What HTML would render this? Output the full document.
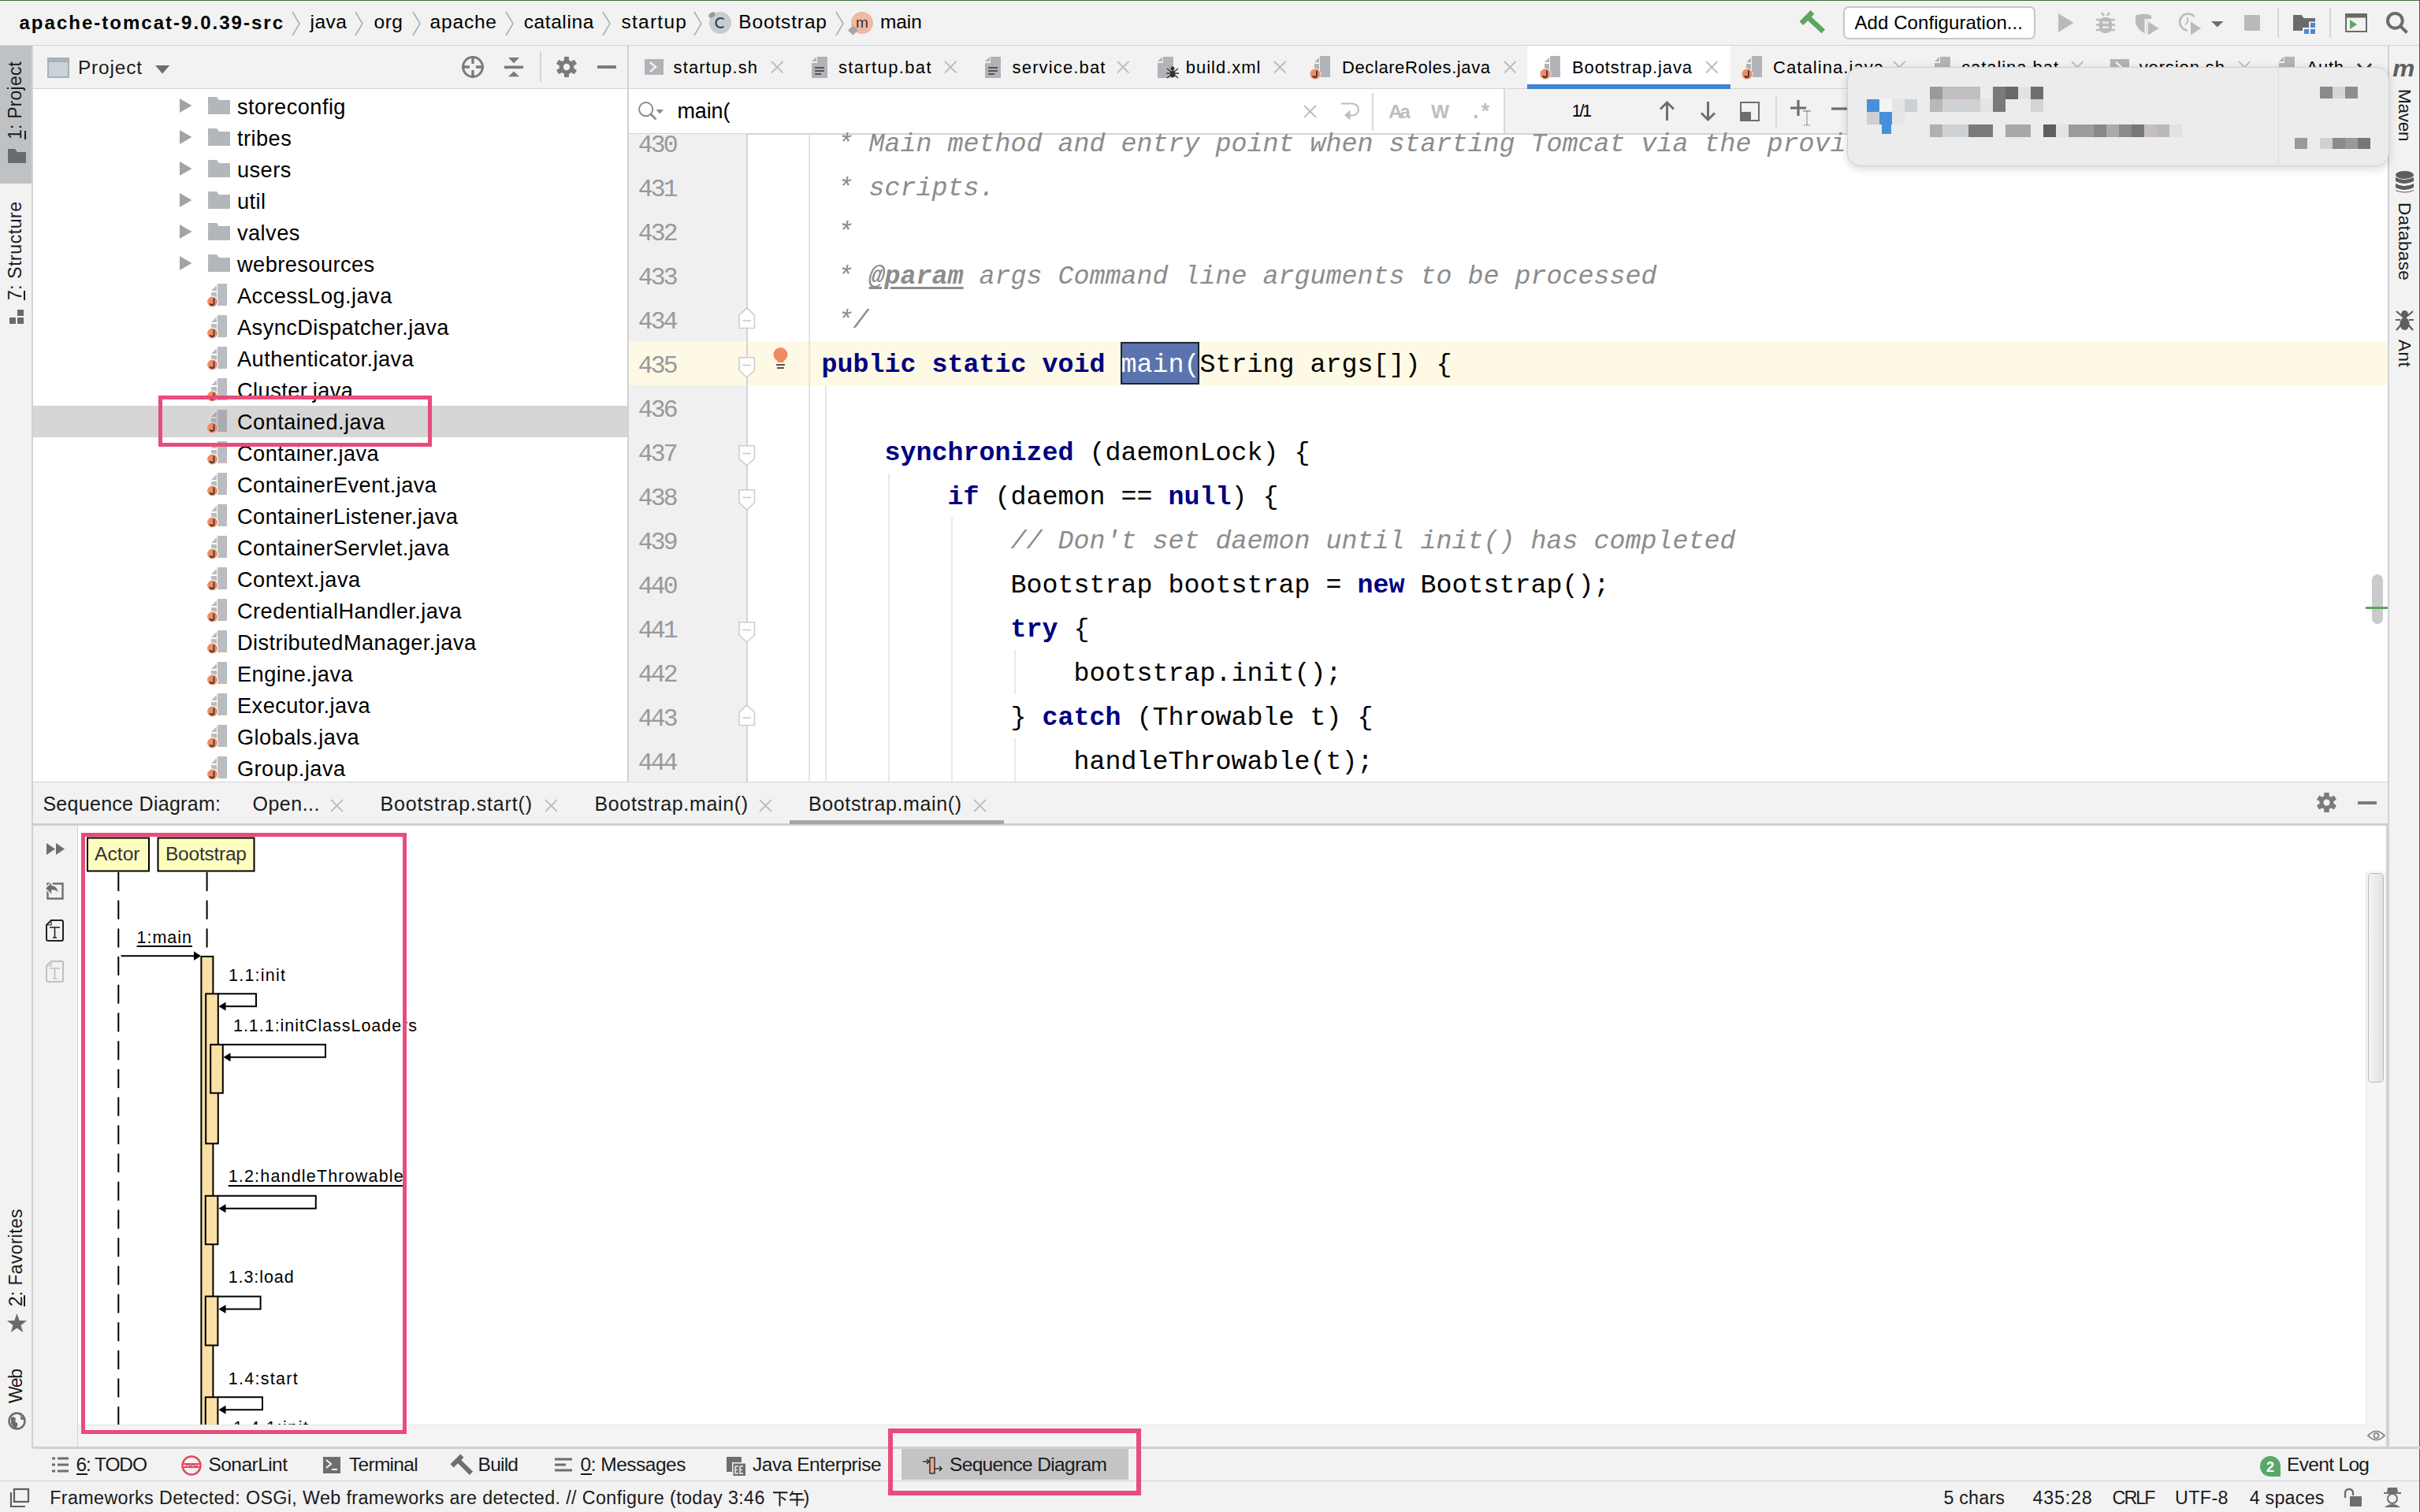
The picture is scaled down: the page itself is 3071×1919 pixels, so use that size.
<!DOCTYPE html>
<html><head><meta charset="utf-8">
<style>
*{margin:0;padding:0;box-sizing:border-box}
html,body{width:3071px;height:1919px;overflow:hidden;background:#f2f2f2;font-family:"Liberation Sans",sans-serif;color:#000;position:relative}
.a{position:absolute}
.t{position:absolute;white-space:pre;line-height:1}
svg{position:absolute;overflow:visible}
</style></head><body>
<div class="a" style="left:0px;top:0px;width:3071px;height:1px;background:#356b3c;"></div>
<div class="a" style="left:3070px;top:0px;width:1px;height:1919px;background:#356b3c;"></div>
<div class="a" style="left:0px;top:1px;width:3070px;height:1px;background:#fbfbfb;"></div>
<div class="a" style="left:0px;top:57px;width:3070px;height:1px;background:#d4d4d4;"></div>
<div class="a" style="left:0px;top:58px;width:40px;height:175px;background:#bfc2c5;"></div>
<div class="a" style="left:40px;top:58px;width:2px;height:1780px;background:#d2d2d2;"></div>
<div class="a" style="left:42px;top:113px;width:754px;height:879px;background:#fff;"></div>
<div class="a" style="left:42px;top:112px;width:754px;height:1px;background:#d4d4d4;"></div>
<div class="a" style="left:796px;top:58px;width:2px;height:934px;background:#d2d2d2;"></div>
<div class="a" style="left:798px;top:112px;width:2232px;height:1px;background:#d4d4d4;"></div>
<div class="a" style="left:798px;top:113px;width:1110px;height:56px;background:#fff;"></div>
<div class="a" style="left:1908px;top:113px;width:2px;height:56px;background:#d8d8d8;"></div>
<div class="a" style="left:798px;top:169px;width:2232px;height:2px;background:#d4d4d4;"></div>
<div class="a" style="left:798px;top:171px;width:2232px;height:821px;background:#fff;"></div>
<div class="a" style="left:798px;top:170px;width:150px;height:822px;background:#f0f0f0;"></div>
<div class="a" style="left:3030px;top:58px;width:2px;height:1780px;background:#d2d2d2;"></div>
<div class="a" style="left:42px;top:992px;width:2988px;height:1px;background:#d4d4d4;"></div>
<div class="a" style="left:42px;top:1045px;width:2988px;height:3px;background:#d0d0d0;"></div>
<div class="a" style="left:99px;top:1048px;width:2929px;height:761px;background:#fff;"></div>
<div class="a" style="left:98px;top:1048px;width:1px;height:788px;background:#d4d4d4;"></div>
<div class="a" style="left:3028px;top:1048px;width:2px;height:788px;background:#d2d2d2;"></div>
<div class="a" style="left:42px;top:1836px;width:3029px;height:3px;background:#d0d0d0;"></div>
<div class="a" style="left:0px;top:1879px;width:3070px;height:1px;background:#d4d4d4;"></div>
<div class="t" style="left:24.5px;top:16.60px;font-size:24px;color:#000;font-weight:700;letter-spacing:2.016px;">apache-tomcat-9.0.39-src</div>
<svg style="left:370px;top:15px;" width="11" height="30" viewBox="0 0 11 30"><path d="M1 0 L10 15 L1 30" fill="none" stroke="#a9afb4" stroke-width="1.6"/></svg>
<svg style="left:450px;top:15px;" width="11" height="30" viewBox="0 0 11 30"><path d="M1 0 L10 15 L1 30" fill="none" stroke="#a9afb4" stroke-width="1.6"/></svg>
<svg style="left:522.5px;top:15px;" width="11" height="30" viewBox="0 0 11 30"><path d="M1 0 L10 15 L1 30" fill="none" stroke="#a9afb4" stroke-width="1.6"/></svg>
<svg style="left:640.5px;top:15px;" width="11" height="30" viewBox="0 0 11 30"><path d="M1 0 L10 15 L1 30" fill="none" stroke="#a9afb4" stroke-width="1.6"/></svg>
<svg style="left:764px;top:15px;" width="11" height="30" viewBox="0 0 11 30"><path d="M1 0 L10 15 L1 30" fill="none" stroke="#a9afb4" stroke-width="1.6"/></svg>
<svg style="left:880px;top:15px;" width="11" height="30" viewBox="0 0 11 30"><path d="M1 0 L10 15 L1 30" fill="none" stroke="#a9afb4" stroke-width="1.6"/></svg>
<svg style="left:1060px;top:15px;" width="11" height="30" viewBox="0 0 11 30"><path d="M1 0 L10 15 L1 30" fill="none" stroke="#a9afb4" stroke-width="1.6"/></svg>
<div class="t" style="left:393.5px;top:16.18px;font-size:24.5px;color:#000;letter-spacing:0.516px;">java</div>
<div class="t" style="left:474.5px;top:16.18px;font-size:24.5px;color:#000;letter-spacing:0.539px;">org</div>
<div class="t" style="left:545.6px;top:16.18px;font-size:24.5px;color:#000;letter-spacing:0.802px;">apache</div>
<div class="t" style="left:664.7px;top:16.18px;font-size:24.5px;color:#000;letter-spacing:0.592px;">catalina</div>
<div class="t" style="left:788.4px;top:16.18px;font-size:24.5px;color:#000;letter-spacing:1.282px;">startup</div>
<div class="t" style="left:937.3px;top:16.18px;font-size:24.5px;color:#000;letter-spacing:0.853px;">Bootstrap</div>
<div class="t" style="left:1117px;top:16.18px;font-size:24.5px;color:#000;letter-spacing:-0.103px;">main</div>
<svg style="left:900px;top:14.8px;" width="28" height="28" viewBox="0 0 28 28"><circle cx="14" cy="14" r="14" fill="#c6cdd2"/><path d="M18.5 9.5 A6 6 0 1 0 18.5 18.5" fill="none" stroke="#3a3f45" stroke-width="2.2"/><ellipse cx="3.5" cy="4" rx="4.5" ry="3" fill="#9a9a9a" transform="rotate(-35 3.5 4)"/></svg>
<svg style="left:1080px;top:14.8px;" width="28" height="28" viewBox="0 0 28 28"><circle cx="14" cy="14" r="14" fill="#efb9a3"/><text x="14" y="20" text-anchor="middle" font-family="Liberation Sans" font-size="19" fill="#333">m</text><rect x="-2" y="19" width="9" height="9" fill="#a6a6a6" transform="rotate(45 2.5 23.5)"/></svg>
<svg style="left:2284px;top:15px;" width="31" height="28" viewBox="0 0 31 28"><rect x="-10" y="-3.3" width="20" height="6.6" fill="#5aa65e" transform="translate(9 7.5) rotate(-45)"/><rect x="0" y="-3.3" width="27" height="6.6" fill="#5aa65e" transform="translate(10 6.5) rotate(43)"/></svg>
<div class="a" style="left:2339px;top:7.5px;width:244px;height:42.5px;background:#fff;border:2px solid #c9c6c6;border-radius:7px"></div>
<div class="t" style="left:2353.5px;top:16.60px;font-size:24px;color:#000;letter-spacing:0.072px;">Add Configuration...</div>
<svg style="left:2612px;top:17px;" width="20" height="24" viewBox="0 0 20 24"><path d="M0 0 L19.5 12 L0 24 Z" fill="#bababa"/></svg>
<svg style="left:2660px;top:15.4px;" width="24" height="28" viewBox="0 0 24 28"><rect x="4" y="7" width="16" height="20" rx="7" fill="#bababa"/><path d="M7 1 L10 5 M17 1 L14 5 M0 10 H24 M0 16.5 H24 M0 23 H24" stroke="#bababa" stroke-width="2.4"/><rect x="8" y="12.5" width="8" height="2.2" fill="#f2f2f2"/><rect x="8" y="18.5" width="8" height="2.2" fill="#f2f2f2"/></svg>
<svg style="left:2710px;top:17px;" width="30" height="28" viewBox="0 0 30 28"><path d="M0 2.5 Q10 -1 20 2.5 V7 H14.5 V25 Q12 26.5 10.5 24.5 Q1.5 20 0 11 Z" fill="#bababa"/><rect x="11.5" y="7" width="2.4" height="18" fill="#f2f2f2"/><path d="M16 10.6 L29.5 19 L16 27.4 Z" fill="#bababa"/></svg>
<svg style="left:2764px;top:16px;" width="30" height="29" viewBox="0 0 30 29"><path d="M20.5 5 A10.5 10.5 0 1 0 11.8 22.5" fill="none" stroke="#bababa" stroke-width="2.6"/><path d="M12 6 V12 L9 15.5" fill="none" stroke="#bababa" stroke-width="1.8"/><path d="M16 11.5 L29 20 L16 28.5 Z" fill="#bababa"/></svg>
<svg style="left:2806px;top:27px;" width="16" height="8" viewBox="0 0 16 8"><path d="M0 0 H15.6 L7.8 7.5 Z" fill="#6e6e6e"/></svg>
<div class="a" style="left:2848px;top:19px;width:20px;height:20px;background:#bababa;"></div>
<div class="a" style="left:2890px;top:10px;width:2px;height:38px;background:#d4d4d4;"></div>
<svg style="left:2910px;top:19px;" width="29" height="25" viewBox="0 0 29 25"><path d="M0 0 H10.6 L13.5 4 H28 V8.5 H20 V16 H12 V20 H0 Z" fill="#6b6b6b"/><rect x="22" y="10" width="6" height="6" fill="#4a8ad4"/><rect x="14" y="18" width="6" height="6" fill="#4a8ad4"/><rect x="22" y="18" width="6" height="6" fill="#4a8ad4"/></svg>
<div class="a" style="left:2956px;top:10px;width:2px;height:38px;background:#d4d4d4;"></div>
<svg style="left:2976px;top:17px;" width="28" height="24" viewBox="0 0 28 24"><rect x="1" y="1" width="26" height="22" fill="none" stroke="#6b6b6b" stroke-width="2"/><rect x="0" y="0" width="28" height="5.5" fill="#6b6b6b"/><path d="M6 8 L15 14 L6 20 Z" fill="#5aa86a"/></svg>
<svg style="left:3026px;top:13px;" width="32" height="32" viewBox="0 0 32 32"><circle cx="13.4" cy="13.3" r="9.4" fill="none" stroke="#6b6b6b" stroke-width="4"/><path d="M20 20 L28.5 28.5" stroke="#6b6b6b" stroke-width="4"/></svg>
<div class="t" style="left:7.72px;top:177.00px;font-size:23px;color:#1a1a1a;letter-spacing:0.205px;transform-origin:0 0;transform:rotate(-90deg);">1: Project</div>
<div class="a" style="left:30.5px;top:166px;width:2px;height:11px;background:#1a1a1a;"></div>
<div class="a" style="left:29.5px;top:368.5px;width:2px;height:12px;background:#1a1a1a;"></div>
<div class="a" style="left:29.5px;top:1644px;width:2px;height:14px;background:#1a1a1a;"></div>
<svg style="left:10px;top:189px;" width="23" height="18" viewBox="0 0 23 18"><path d="M0 0 H9 L12 4 H23 V18 H0 Z" fill="#6b6b6b"/></svg>
<div class="t" style="left:8.32px;top:381.00px;font-size:23px;color:#1a1a1a;letter-spacing:0.555px;transform-origin:0 0;transform:rotate(-90deg);">7: Structure</div>
<svg style="left:12px;top:393px;" width="18" height="18" viewBox="0 0 18 18"><rect x="10" y="0" width="8" height="8" fill="#6a6a6a"/><rect x="0" y="10" width="8" height="8" fill="#6a6a6a"/><rect x="10" y="10" width="8" height="8" fill="#6a6a6a"/></svg>
<div class="t" style="left:8.72px;top:1658.40px;font-size:23px;color:#1a1a1a;letter-spacing:0.313px;transform-origin:0 0;transform:rotate(-90deg);">2: Favorites</div>
<svg style="left:8.5px;top:1667px;" width="25" height="25" viewBox="0 0 25 25"><path d="M12.5 0 L15.6 8.9 L25 9.2 L17.5 15 L20.2 24 L12.5 18.6 L4.8 24 L7.5 15 L0 9.2 L9.4 8.9 Z" fill="#6a6a6a"/></svg>
<div class="t" style="left:8.72px;top:1781.00px;font-size:23px;color:#1a1a1a;letter-spacing:-1.445px;transform-origin:0 0;transform:rotate(-90deg);">Web</div>
<svg style="left:10px;top:1792px;" width="23" height="23" viewBox="0 0 23 23"><circle cx="11.5" cy="11.5" r="10" fill="none" stroke="#6a6a6a" stroke-width="2.5"/><path d="M4 7 Q9 5 10 9 Q8 13 12 14 Q13 18 10 21 Q5 18 4 14 Z M14 3 Q17 6 16 9 Q19 11 21 9" fill="#6a6a6a"/></svg>
<div class="t" style="left:3061.6px;top:112.80px;font-size:22.5px;color:#1a1a1a;letter-spacing:-0.237px;transform-origin:0 0;transform:rotate(90deg);">Maven</div>
<div class="t" style="left:3037px;top:72.00px;font-size:30px;color:#5e5e5e;font-weight:700;font-style:italic;transform:scaleX(1.05)">m</div>
<svg style="left:3039.5px;top:217px;" width="23" height="29" viewBox="0 0 23 29"><ellipse cx="11.5" cy="5" rx="11.5" ry="5" fill="#5e5e5e"/><path d="M0 8 Q11.5 14 23 8 V13 Q11.5 19 0 13 Z M0 16 Q11.5 22 23 16 V21 Q11.5 27 0 21 Z M0 24 Q11.5 29 23 24 V25 Q11.5 30 0 25 Z" fill="#5e5e5e"/></svg>
<div class="t" style="left:3061.6px;top:257.00px;font-size:22.5px;color:#1a1a1a;letter-spacing:0.353px;transform-origin:0 0;transform:rotate(90deg);">Database</div>
<svg style="left:3039.5px;top:392px;" width="23" height="28" viewBox="0 0 23 28"><ellipse cx="11.5" cy="7" rx="4.5" ry="5" fill="#5e5e5e"/><ellipse cx="11.5" cy="19" rx="6" ry="8" fill="#5e5e5e"/><path d="M1 3 L8 9 M22 3 L15 9 M0 14 H6 M23 14 H17 M1 27 L7 20 M22 27 L16 20" stroke="#5e5e5e" stroke-width="2.2"/></svg>
<div class="t" style="left:3061.6px;top:430.80px;font-size:22.5px;color:#1a1a1a;letter-spacing:0.459px;transform-origin:0 0;transform:rotate(90deg);">Ant</div>
<svg style="left:60px;top:73px;" width="28" height="26" viewBox="0 0 28 26"><rect x="1" y="1" width="26" height="24" fill="#c9d2d8" stroke="#a9b1b7" stroke-width="2"/><rect x="1" y="1" width="26" height="5" fill="#a9b1b7"/></svg>
<div class="t" style="left:99px;top:74.26px;font-size:24.4px;color:#1a1a1a;letter-spacing:0.846px;">Project</div>
<svg style="left:196.7px;top:82.6px;" width="18.3" height="10.4" viewBox="0 0 18.3 10.4"><path d="M0 0 H18.3 L9.15 10.4 Z" fill="#6e6e6e"/></svg>
<svg style="left:586px;top:71px;" width="28" height="28" viewBox="0 0 28 28"><circle cx="14" cy="14" r="12.4" fill="none" stroke="#7b7b7b" stroke-width="3"/><path d="M14 0 V10 M14 18 V28 M0 14 H10 M18 14 H28" stroke="#7b7b7b" stroke-width="3.3"/></svg>
<svg style="left:640px;top:72.8px;" width="24" height="25" viewBox="0 0 24 25"><path d="M5 0 H19 L12 7.2 Z M5 24.3 H19 L12 17.4 Z" fill="#7b7b7b"/><rect x="0" y="10.5" width="24" height="3.6" fill="#7b7b7b"/></svg>
<div class="a" style="left:684.5px;top:65px;width:2px;height:39px;background:#d4d4d4;"></div>
<svg style="left:705.5px;top:72px;" width="26" height="26" viewBox="0 0 26 26"><rect x="10.0" y="0" width="6" height="26" fill="#7b7b7b" transform="rotate(0 13.0 13.0)"/><rect x="10.0" y="0" width="6" height="26" fill="#7b7b7b" transform="rotate(60 13.0 13.0)"/><rect x="10.0" y="0" width="6" height="26" fill="#7b7b7b" transform="rotate(120 13.0 13.0)"/><rect x="10.0" y="0" width="6" height="26" fill="#7b7b7b" transform="rotate(180 13.0 13.0)"/><rect x="10.0" y="0" width="6" height="26" fill="#7b7b7b" transform="rotate(240 13.0 13.0)"/><rect x="10.0" y="0" width="6" height="26" fill="#7b7b7b" transform="rotate(300 13.0 13.0)"/><circle cx="13.0" cy="13.0" r="9.36" fill="#7b7b7b"/><circle cx="13.0" cy="13.0" r="4.16" fill="#f2f2f2"/></svg>
<div class="a" style="left:758px;top:82.8px;width:24px;height:4px;background:#7b7b7b;"></div>
<div class="a" style="left:42px;top:515px;width:754px;height:40px;background:#d6d6d6;"></div>
<svg style="left:228px;top:125px;" width="16" height="18" viewBox="0 0 16 18"><path d="M0 0 L15.5 9 L0 18 Z" fill="#a0a4a8"/></svg>
<svg style="left:264px;top:123px;" width="28" height="22" viewBox="0 0 28 22"><path d="M0 0 H11 L14 4 H28 V22 H0 Z" fill="#b3b7bb"/></svg>
<div class="t" style="left:301px;top:121.88px;font-size:27.2px;color:#000;letter-spacing:0.45px;">storeconfig</div>
<svg style="left:228px;top:165px;" width="16" height="18" viewBox="0 0 16 18"><path d="M0 0 L15.5 9 L0 18 Z" fill="#a0a4a8"/></svg>
<svg style="left:264px;top:163px;" width="28" height="22" viewBox="0 0 28 22"><path d="M0 0 H11 L14 4 H28 V22 H0 Z" fill="#b3b7bb"/></svg>
<div class="t" style="left:301px;top:161.88px;font-size:27.2px;color:#000;letter-spacing:0.45px;">tribes</div>
<svg style="left:228px;top:205px;" width="16" height="18" viewBox="0 0 16 18"><path d="M0 0 L15.5 9 L0 18 Z" fill="#a0a4a8"/></svg>
<svg style="left:264px;top:203px;" width="28" height="22" viewBox="0 0 28 22"><path d="M0 0 H11 L14 4 H28 V22 H0 Z" fill="#b3b7bb"/></svg>
<div class="t" style="left:301px;top:201.88px;font-size:27.2px;color:#000;letter-spacing:0.45px;">users</div>
<svg style="left:228px;top:245px;" width="16" height="18" viewBox="0 0 16 18"><path d="M0 0 L15.5 9 L0 18 Z" fill="#a0a4a8"/></svg>
<svg style="left:264px;top:243px;" width="28" height="22" viewBox="0 0 28 22"><path d="M0 0 H11 L14 4 H28 V22 H0 Z" fill="#b3b7bb"/></svg>
<div class="t" style="left:301px;top:241.88px;font-size:27.2px;color:#000;letter-spacing:0.45px;">util</div>
<svg style="left:228px;top:285px;" width="16" height="18" viewBox="0 0 16 18"><path d="M0 0 L15.5 9 L0 18 Z" fill="#a0a4a8"/></svg>
<svg style="left:264px;top:283px;" width="28" height="22" viewBox="0 0 28 22"><path d="M0 0 H11 L14 4 H28 V22 H0 Z" fill="#b3b7bb"/></svg>
<div class="t" style="left:301px;top:281.88px;font-size:27.2px;color:#000;letter-spacing:0.45px;">valves</div>
<svg style="left:228px;top:325px;" width="16" height="18" viewBox="0 0 16 18"><path d="M0 0 L15.5 9 L0 18 Z" fill="#a0a4a8"/></svg>
<svg style="left:264px;top:323px;" width="28" height="22" viewBox="0 0 28 22"><path d="M0 0 H11 L14 4 H28 V22 H0 Z" fill="#b3b7bb"/></svg>
<div class="t" style="left:301px;top:321.88px;font-size:27.2px;color:#000;letter-spacing:0.45px;">webresources</div>
<svg style="left:261.5px;top:360px;" width="27" height="31" viewBox="0 0 27 31"><path d="M14 0 H26 V28 H14 Z" fill="#b9bdc1"/><path d="M6 9 L13 2 V9 Z" fill="#b9bdc1"/><path d="M6 11 H13 V28 H6 Z" fill="#b9bdc1"/><circle cx="7.5" cy="23" r="7" fill="#ee8c63" stroke="#fff" stroke-width="1.2"/><path d="M9.5 18.5 V24.5 Q9.5 27 7 27 Q5 27 4.6 25" fill="none" stroke="#3a3a3a" stroke-width="1.8"/></svg>
<div class="t" style="left:301px;top:361.88px;font-size:27.2px;color:#000;letter-spacing:0.45px;">AccessLog.java</div>
<svg style="left:261.5px;top:400px;" width="27" height="31" viewBox="0 0 27 31"><path d="M14 0 H26 V28 H14 Z" fill="#b9bdc1"/><path d="M6 9 L13 2 V9 Z" fill="#b9bdc1"/><path d="M6 11 H13 V28 H6 Z" fill="#b9bdc1"/><circle cx="7.5" cy="23" r="7" fill="#ee8c63" stroke="#fff" stroke-width="1.2"/><path d="M9.5 18.5 V24.5 Q9.5 27 7 27 Q5 27 4.6 25" fill="none" stroke="#3a3a3a" stroke-width="1.8"/></svg>
<div class="t" style="left:301px;top:401.88px;font-size:27.2px;color:#000;letter-spacing:0.45px;">AsyncDispatcher.java</div>
<svg style="left:261.5px;top:440px;" width="27" height="31" viewBox="0 0 27 31"><path d="M14 0 H26 V28 H14 Z" fill="#b9bdc1"/><path d="M6 9 L13 2 V9 Z" fill="#b9bdc1"/><path d="M6 11 H13 V28 H6 Z" fill="#b9bdc1"/><circle cx="7.5" cy="23" r="7" fill="#ee8c63" stroke="#fff" stroke-width="1.2"/><path d="M9.5 18.5 V24.5 Q9.5 27 7 27 Q5 27 4.6 25" fill="none" stroke="#3a3a3a" stroke-width="1.8"/></svg>
<div class="t" style="left:301px;top:441.88px;font-size:27.2px;color:#000;letter-spacing:0.45px;">Authenticator.java</div>
<svg style="left:261.5px;top:480px;" width="27" height="31" viewBox="0 0 27 31"><path d="M14 0 H26 V28 H14 Z" fill="#b9bdc1"/><path d="M6 9 L13 2 V9 Z" fill="#b9bdc1"/><path d="M6 11 H13 V28 H6 Z" fill="#b9bdc1"/><circle cx="7.5" cy="23" r="7" fill="#ee8c63" stroke="#fff" stroke-width="1.2"/><path d="M9.5 18.5 V24.5 Q9.5 27 7 27 Q5 27 4.6 25" fill="none" stroke="#3a3a3a" stroke-width="1.8"/></svg>
<div class="t" style="left:301px;top:481.88px;font-size:27.2px;color:#000;letter-spacing:0.45px;">Cluster.java</div>
<svg style="left:261.5px;top:520px;" width="27" height="31" viewBox="0 0 27 31"><path d="M14 0 H26 V28 H14 Z" fill="#a9adb1"/><path d="M6 9 L13 2 V9 Z" fill="#a9adb1"/><path d="M6 11 H13 V28 H6 Z" fill="#a9adb1"/><circle cx="7.5" cy="23" r="7" fill="#ee8c63" stroke="#d5d5d5" stroke-width="1.2"/><path d="M9.5 18.5 V24.5 Q9.5 27 7 27 Q5 27 4.6 25" fill="none" stroke="#3a3a3a" stroke-width="1.8"/></svg>
<div class="t" style="left:301px;top:521.88px;font-size:27.2px;color:#000;letter-spacing:0.45px;">Contained.java</div>
<svg style="left:261.5px;top:560px;" width="27" height="31" viewBox="0 0 27 31"><path d="M14 0 H26 V28 H14 Z" fill="#b9bdc1"/><path d="M6 9 L13 2 V9 Z" fill="#b9bdc1"/><path d="M6 11 H13 V28 H6 Z" fill="#b9bdc1"/><circle cx="7.5" cy="23" r="7" fill="#ee8c63" stroke="#fff" stroke-width="1.2"/><path d="M9.5 18.5 V24.5 Q9.5 27 7 27 Q5 27 4.6 25" fill="none" stroke="#3a3a3a" stroke-width="1.8"/></svg>
<div class="t" style="left:301px;top:561.88px;font-size:27.2px;color:#000;letter-spacing:0.45px;">Container.java</div>
<svg style="left:261.5px;top:600px;" width="27" height="31" viewBox="0 0 27 31"><path d="M14 0 H26 V28 H14 Z" fill="#b9bdc1"/><path d="M6 9 L13 2 V9 Z" fill="#b9bdc1"/><path d="M6 11 H13 V28 H6 Z" fill="#b9bdc1"/><circle cx="7.5" cy="23" r="7" fill="#ee8c63" stroke="#fff" stroke-width="1.2"/><path d="M9.5 18.5 V24.5 Q9.5 27 7 27 Q5 27 4.6 25" fill="none" stroke="#3a3a3a" stroke-width="1.8"/></svg>
<div class="t" style="left:301px;top:601.88px;font-size:27.2px;color:#000;letter-spacing:0.45px;">ContainerEvent.java</div>
<svg style="left:261.5px;top:640px;" width="27" height="31" viewBox="0 0 27 31"><path d="M14 0 H26 V28 H14 Z" fill="#b9bdc1"/><path d="M6 9 L13 2 V9 Z" fill="#b9bdc1"/><path d="M6 11 H13 V28 H6 Z" fill="#b9bdc1"/><circle cx="7.5" cy="23" r="7" fill="#ee8c63" stroke="#fff" stroke-width="1.2"/><path d="M9.5 18.5 V24.5 Q9.5 27 7 27 Q5 27 4.6 25" fill="none" stroke="#3a3a3a" stroke-width="1.8"/></svg>
<div class="t" style="left:301px;top:641.88px;font-size:27.2px;color:#000;letter-spacing:0.45px;">ContainerListener.java</div>
<svg style="left:261.5px;top:680px;" width="27" height="31" viewBox="0 0 27 31"><path d="M14 0 H26 V28 H14 Z" fill="#b9bdc1"/><path d="M6 9 L13 2 V9 Z" fill="#b9bdc1"/><path d="M6 11 H13 V28 H6 Z" fill="#b9bdc1"/><circle cx="7.5" cy="23" r="7" fill="#ee8c63" stroke="#fff" stroke-width="1.2"/><path d="M9.5 18.5 V24.5 Q9.5 27 7 27 Q5 27 4.6 25" fill="none" stroke="#3a3a3a" stroke-width="1.8"/></svg>
<div class="t" style="left:301px;top:681.88px;font-size:27.2px;color:#000;letter-spacing:0.45px;">ContainerServlet.java</div>
<svg style="left:261.5px;top:720px;" width="27" height="31" viewBox="0 0 27 31"><path d="M14 0 H26 V28 H14 Z" fill="#b9bdc1"/><path d="M6 9 L13 2 V9 Z" fill="#b9bdc1"/><path d="M6 11 H13 V28 H6 Z" fill="#b9bdc1"/><circle cx="7.5" cy="23" r="7" fill="#ee8c63" stroke="#fff" stroke-width="1.2"/><path d="M9.5 18.5 V24.5 Q9.5 27 7 27 Q5 27 4.6 25" fill="none" stroke="#3a3a3a" stroke-width="1.8"/></svg>
<div class="t" style="left:301px;top:721.88px;font-size:27.2px;color:#000;letter-spacing:0.45px;">Context.java</div>
<svg style="left:261.5px;top:760px;" width="27" height="31" viewBox="0 0 27 31"><path d="M14 0 H26 V28 H14 Z" fill="#b9bdc1"/><path d="M6 9 L13 2 V9 Z" fill="#b9bdc1"/><path d="M6 11 H13 V28 H6 Z" fill="#b9bdc1"/><circle cx="7.5" cy="23" r="7" fill="#ee8c63" stroke="#fff" stroke-width="1.2"/><path d="M9.5 18.5 V24.5 Q9.5 27 7 27 Q5 27 4.6 25" fill="none" stroke="#3a3a3a" stroke-width="1.8"/></svg>
<div class="t" style="left:301px;top:761.88px;font-size:27.2px;color:#000;letter-spacing:0.45px;">CredentialHandler.java</div>
<svg style="left:261.5px;top:800px;" width="27" height="31" viewBox="0 0 27 31"><path d="M14 0 H26 V28 H14 Z" fill="#b9bdc1"/><path d="M6 9 L13 2 V9 Z" fill="#b9bdc1"/><path d="M6 11 H13 V28 H6 Z" fill="#b9bdc1"/><circle cx="7.5" cy="23" r="7" fill="#ee8c63" stroke="#fff" stroke-width="1.2"/><path d="M9.5 18.5 V24.5 Q9.5 27 7 27 Q5 27 4.6 25" fill="none" stroke="#3a3a3a" stroke-width="1.8"/></svg>
<div class="t" style="left:301px;top:801.88px;font-size:27.2px;color:#000;letter-spacing:0.45px;">DistributedManager.java</div>
<svg style="left:261.5px;top:840px;" width="27" height="31" viewBox="0 0 27 31"><path d="M14 0 H26 V28 H14 Z" fill="#b9bdc1"/><path d="M6 9 L13 2 V9 Z" fill="#b9bdc1"/><path d="M6 11 H13 V28 H6 Z" fill="#b9bdc1"/><circle cx="7.5" cy="23" r="7" fill="#ee8c63" stroke="#fff" stroke-width="1.2"/><path d="M9.5 18.5 V24.5 Q9.5 27 7 27 Q5 27 4.6 25" fill="none" stroke="#3a3a3a" stroke-width="1.8"/></svg>
<div class="t" style="left:301px;top:841.88px;font-size:27.2px;color:#000;letter-spacing:0.45px;">Engine.java</div>
<svg style="left:261.5px;top:880px;" width="27" height="31" viewBox="0 0 27 31"><path d="M14 0 H26 V28 H14 Z" fill="#b9bdc1"/><path d="M6 9 L13 2 V9 Z" fill="#b9bdc1"/><path d="M6 11 H13 V28 H6 Z" fill="#b9bdc1"/><circle cx="7.5" cy="23" r="7" fill="#ee8c63" stroke="#fff" stroke-width="1.2"/><path d="M9.5 18.5 V24.5 Q9.5 27 7 27 Q5 27 4.6 25" fill="none" stroke="#3a3a3a" stroke-width="1.8"/></svg>
<div class="t" style="left:301px;top:881.88px;font-size:27.2px;color:#000;letter-spacing:0.45px;">Executor.java</div>
<svg style="left:261.5px;top:920px;" width="27" height="31" viewBox="0 0 27 31"><path d="M14 0 H26 V28 H14 Z" fill="#b9bdc1"/><path d="M6 9 L13 2 V9 Z" fill="#b9bdc1"/><path d="M6 11 H13 V28 H6 Z" fill="#b9bdc1"/><circle cx="7.5" cy="23" r="7" fill="#ee8c63" stroke="#fff" stroke-width="1.2"/><path d="M9.5 18.5 V24.5 Q9.5 27 7 27 Q5 27 4.6 25" fill="none" stroke="#3a3a3a" stroke-width="1.8"/></svg>
<div class="t" style="left:301px;top:921.88px;font-size:27.2px;color:#000;letter-spacing:0.45px;">Globals.java</div>
<svg style="left:261.5px;top:960px;" width="27" height="31" viewBox="0 0 27 31"><path d="M14 0 H26 V28 H14 Z" fill="#b9bdc1"/><path d="M6 9 L13 2 V9 Z" fill="#b9bdc1"/><path d="M6 11 H13 V28 H6 Z" fill="#b9bdc1"/><circle cx="7.5" cy="23" r="7" fill="#ee8c63" stroke="#fff" stroke-width="1.2"/><path d="M9.5 18.5 V24.5 Q9.5 27 7 27 Q5 27 4.6 25" fill="none" stroke="#3a3a3a" stroke-width="1.8"/></svg>
<div class="t" style="left:301px;top:961.88px;font-size:27.2px;color:#000;letter-spacing:0.45px;">Group.java</div>
<div class="a" style="left:1938px;top:58px;width:258px;height:54px;background:#fff;"></div>
<div class="a" style="left:1938px;top:107px;width:258px;height:5.5px;background:#4083d1;"></div>
<svg style="left:818px;top:75px;" width="24" height="20" viewBox="0 0 24 20"><rect x="0" y="0" width="24" height="20" fill="#b0b4b8"/><path d="M7 4 L14 10 L7 16" fill="none" stroke="#f2f2f2" stroke-width="2.5"/></svg>
<div class="t" style="left:854.6px;top:75.30px;font-size:22px;color:#000;letter-spacing:1.088px;">startup.sh</div>
<svg style="left:978.5px;top:78px;" width="14.5" height="14.5" viewBox="0 0 14.5 14.5"><path d="M0 0 L14.5 14.5 M14.5 0 L0 14.5" stroke="#b9bec2" stroke-width="1.8"/></svg>
<svg style="left:1030px;top:71.5px;" width="20" height="27" viewBox="0 0 20 27"><path d="M7 0 H20 V27 H0 V8 H7 Z" fill="#b0b4b8"/><path d="M0 6 L6 0 V6 Z" fill="#b0b4b8"/><path d="M4 14 H16 M4 18 H16 M4 22 H12" stroke="#555" stroke-width="1.8"/></svg>
<div class="t" style="left:1064px;top:75.30px;font-size:22px;color:#000;letter-spacing:1.355px;">startup.bat</div>
<svg style="left:1198.5px;top:78px;" width="14.5" height="14.5" viewBox="0 0 14.5 14.5"><path d="M0 0 L14.5 14.5 M14.5 0 L0 14.5" stroke="#b9bec2" stroke-width="1.8"/></svg>
<svg style="left:1249.5px;top:71.5px;" width="20" height="27" viewBox="0 0 20 27"><path d="M7 0 H20 V27 H0 V8 H7 Z" fill="#b0b4b8"/><path d="M0 6 L6 0 V6 Z" fill="#b0b4b8"/><path d="M4 14 H16 M4 18 H16 M4 22 H12" stroke="#555" stroke-width="1.8"/></svg>
<div class="t" style="left:1284.6px;top:75.30px;font-size:22px;color:#000;letter-spacing:1.151px;">service.bat</div>
<svg style="left:1418.0px;top:78px;" width="14.5" height="14.5" viewBox="0 0 14.5 14.5"><path d="M0 0 L14.5 14.5 M14.5 0 L0 14.5" stroke="#b9bec2" stroke-width="1.8"/></svg>
<svg style="left:1469px;top:71.5px;" width="27" height="29" viewBox="0 0 27 29"><path d="M7 0 H20 V27 H0 V8 H7 Z" fill="#b0b4b8"/><path d="M0 6 L6 0 V6 Z" fill="#b0b4b8"/><ellipse cx="19" cy="22" rx="4" ry="5" fill="#333" stroke="#f2f2f2" stroke-width="1"/><circle cx="19" cy="15" r="2.5" fill="#333"/><path d="M12 15 L26 27 M26 15 L12 27 M11 21 H27" stroke="#333" stroke-width="1.4"/></svg>
<div class="t" style="left:1504.7px;top:75.30px;font-size:22px;color:#000;letter-spacing:0.998px;">build.xml</div>
<svg style="left:1616.5px;top:78px;" width="14.5" height="14.5" viewBox="0 0 14.5 14.5"><path d="M0 0 L14.5 14.5 M14.5 0 L0 14.5" stroke="#b9bec2" stroke-width="1.8"/></svg>
<svg style="left:1662px;top:71px;" width="27" height="30" viewBox="0 0 27 30"><path d="M13 0 H26 V27 H13 Z" fill="#b0b4b8"/><path d="M6 8 L12 2 V8 Z" fill="#b0b4b8"/><path d="M6 10 H12 V27 H6 Z" fill="#b0b4b8"/><circle cx="7" cy="23" r="7" fill="#ee8c63" stroke="#f2f2f2" stroke-width="1"/><path d="M9 18.5 V24.5 Q9 27 6.5 27 Q4.5 27 4.2 25" fill="none" stroke="#333" stroke-width="1.8"/></svg>
<div class="t" style="left:1703px;top:75.30px;font-size:22px;color:#000;letter-spacing:0.592px;">DeclareRoles.java</div>
<svg style="left:1909.0px;top:78px;" width="14.5" height="14.5" viewBox="0 0 14.5 14.5"><path d="M0 0 L14.5 14.5 M14.5 0 L0 14.5" stroke="#b9bec2" stroke-width="1.8"/></svg>
<svg style="left:1954px;top:71px;" width="27" height="30" viewBox="0 0 27 30"><path d="M13 0 H26 V27 H13 Z" fill="#b0b4b8"/><path d="M6 8 L12 2 V8 Z" fill="#b0b4b8"/><path d="M6 10 H12 V27 H6 Z" fill="#b0b4b8"/><circle cx="7" cy="23" r="7" fill="#ee8c63" stroke="#f2f2f2" stroke-width="1"/><path d="M9 18.5 V24.5 Q9 27 6.5 27 Q4.5 27 4.2 25" fill="none" stroke="#333" stroke-width="1.8"/></svg>
<div class="t" style="left:1995px;top:75.30px;font-size:22px;color:#000;letter-spacing:0.874px;">Bootstrap.java</div>
<svg style="left:2164.5px;top:78px;" width="14.5" height="14.5" viewBox="0 0 14.5 14.5"><path d="M0 0 L14.5 14.5 M14.5 0 L0 14.5" stroke="#b9bec2" stroke-width="1.8"/></svg>
<svg style="left:2210px;top:71px;" width="27" height="30" viewBox="0 0 27 30"><path d="M13 0 H26 V27 H13 Z" fill="#b0b4b8"/><path d="M6 8 L12 2 V8 Z" fill="#b0b4b8"/><path d="M6 10 H12 V27 H6 Z" fill="#b0b4b8"/><circle cx="7" cy="23" r="7" fill="#ee8c63" stroke="#f2f2f2" stroke-width="1"/><path d="M9 18.5 V24.5 Q9 27 6.5 27 Q4.5 27 4.2 25" fill="none" stroke="#333" stroke-width="1.8"/></svg>
<div class="t" style="left:2250px;top:75.30px;font-size:22px;color:#000;letter-spacing:1.068px;">Catalina.java</div>
<svg style="left:2403.1px;top:78px;" width="14.5" height="14.5" viewBox="0 0 14.5 14.5"><path d="M0 0 L14.5 14.5 M14.5 0 L0 14.5" stroke="#b9bec2" stroke-width="1.8"/></svg>
<svg style="left:2455px;top:71.5px;" width="20" height="27" viewBox="0 0 20 27"><path d="M7 0 H20 V27 H0 V8 H7 Z" fill="#b0b4b8"/><path d="M0 6 L6 0 V6 Z" fill="#b0b4b8"/><path d="M4 14 H16 M4 18 H16 M4 22 H12" stroke="#555" stroke-width="1.8"/></svg>
<div class="t" style="left:2489px;top:75.30px;font-size:22px;color:#000;letter-spacing:0.952px;">catalina.bat</div>
<svg style="left:2628.5px;top:78px;" width="14.5" height="14.5" viewBox="0 0 14.5 14.5"><path d="M0 0 L14.5 14.5 M14.5 0 L0 14.5" stroke="#b9bec2" stroke-width="1.8"/></svg>
<svg style="left:2678px;top:75px;" width="24" height="20" viewBox="0 0 24 20"><rect x="0" y="0" width="24" height="20" fill="#b0b4b8"/><path d="M7 4 L14 10 L7 16" fill="none" stroke="#f2f2f2" stroke-width="2.5"/></svg>
<div class="t" style="left:2714.7px;top:75.30px;font-size:22px;color:#000;letter-spacing:0.891px;">version.sh</div>
<svg style="left:2840.5px;top:78px;" width="14.5" height="14.5" viewBox="0 0 14.5 14.5"><path d="M0 0 L14.5 14.5 M14.5 0 L0 14.5" stroke="#b9bec2" stroke-width="1.8"/></svg>
<svg style="left:2892px;top:71.5px;" width="20" height="27" viewBox="0 0 20 27"><path d="M7 0 H20 V27 H0 V8 H7 Z" fill="#b0b4b8"/><path d="M0 6 L6 0 V6 Z" fill="#b0b4b8"/><path d="M4 14 H16 M4 18 H16 M4 22 H12" stroke="#555" stroke-width="1.8"/></svg>
<div class="t" style="left:2926.7px;top:75.30px;font-size:22px;color:#000;letter-spacing:0.678px;">Auth</div>
<svg style="left:2991px;top:80px;" width="19" height="12" viewBox="0 0 19 12"><path d="M1 1 L9.5 10 L18 1" fill="none" stroke="#333" stroke-width="2.6"/></svg>
<svg style="left:810px;top:129px;" width="33" height="24" viewBox="0 0 33 24"><circle cx="9.7" cy="9.7" r="8.6" fill="none" stroke="#8c8c8c" stroke-width="2"/><path d="M16 16 L22.5 22.5" stroke="#8c8c8c" stroke-width="2.8"/><path d="M22.5 10 H32 L27.2 15.5 Z" fill="#8c8c8c"/></svg>
<div class="t" style="left:859.5px;top:128.05px;font-size:27px;color:#000;letter-spacing:-0.129px;">main(</div>
<svg style="left:1655px;top:133.5px;" width="15" height="15" viewBox="0 0 15 15"><path d="M0 0 L15 15 M15 0 L0 15" stroke="#b9bfc3" stroke-width="1.8"/></svg>
<svg style="left:1703px;top:129px;" width="24" height="26" viewBox="0 0 24 26"><path d="M-1 2.5 H13.4 A7.5 7.5 0 0 1 13.4 17.5 H9" fill="none" stroke="#b9bfc3" stroke-width="2.2"/><path d="M3 17.2 L10.5 10.6 V23.6 Z" fill="#b9bfc3"/></svg>
<div class="a" style="left:1740.5px;top:118px;width:2px;height:48px;background:#d8d8d8;"></div>
<div class="t" style="left:1762px;top:130.18px;font-size:24.5px;color:#b9bfc3;font-weight:700;letter-spacing:-3.328px;">Aa</div>
<div class="t" style="left:1816px;top:130.18px;font-size:24.5px;color:#b9bfc3;font-weight:700;">W</div>
<div class="t" style="left:1869px;top:128.05px;font-size:27px;color:#b9bfc3;font-weight:700;letter-spacing:2.984px;">.*</div>
<div class="t" style="left:1994.8px;top:130.92px;font-size:21.5px;color:#000;letter-spacing:-2.345px;">1/1</div>
<svg style="left:2106px;top:129.3px;" width="19" height="24" viewBox="0 0 19 24"><path d="M9.5 1 V24 M1 9.5 L9.5 1 L18 9.5" fill="none" stroke="#6e6e6e" stroke-width="3"/></svg>
<svg style="left:2158px;top:129.3px;" width="19" height="24" viewBox="0 0 19 24"><path d="M9.5 0 V23 M1 14.5 L9.5 23 L18 14.5" fill="none" stroke="#6e6e6e" stroke-width="3"/></svg>
<svg style="left:2207.5px;top:129px;" width="25" height="25" viewBox="0 0 25 25"><rect x="1" y="1" width="23" height="23" fill="none" stroke="#6e6e6e" stroke-width="2"/><rect x="1" y="13" width="13" height="11" fill="#6e6e6e"/></svg>
<div class="a" style="left:2253px;top:122px;width:2px;height:40px;background:#d8d8d8;"></div>
<svg style="left:2272px;top:127px;" width="30" height="34" viewBox="0 0 30 34"><path d="M10 0 V20 M0 10 H20" stroke="#6e6e6e" stroke-width="3.2"/><path d="M17 14 H25 M17 32 H25 M21 14 V32 M16 14 H26" stroke="#6e6e6e" stroke-width="1.2" stroke-dasharray="2 1"/></svg>
<svg style="left:2324px;top:132px;" width="30" height="30" viewBox="0 0 30 30"><path d="M0 6 H20" stroke="#6e6e6e" stroke-width="3.2"/></svg>
<div class="a" style="left:798px;top:433px;width:2232px;height:56px;background:#fef9e4;"></div>
<div class="a" style="left:947.2px;top:170px;width:1.6px;height:822px;background:#d2d5d8;"></div>
<div class="a" style="left:1026px;top:170px;width:1.6px;height:822px;background:#e4e4e6;"></div>
<div class="a" style="left:1047px;top:489px;width:1.5px;height:503px;background:#e8e8e8;"></div>
<div class="a" style="left:1127px;top:601px;width:1.5px;height:391px;background:#e8e8e8;"></div>
<div class="a" style="left:1207px;top:657px;width:1.5px;height:335px;background:#e8e8e8;"></div>
<div class="a" style="left:1287px;top:825px;width:1.5px;height:56px;background:#e8e8e8;"></div>
<div class="a" style="left:1287px;top:937px;width:1.5px;height:55px;background:#e8e8e8;"></div>
<div class="t" style="left:809.7px;top:168.86px;font-size:31.5px;color:#999999;font-family:'Liberation Mono',monospace;letter-spacing:-2.859px;">430</div>
<div class="t" style="left:809.7px;top:224.86px;font-size:31.5px;color:#999999;font-family:'Liberation Mono',monospace;letter-spacing:-2.859px;">431</div>
<div class="t" style="left:809.7px;top:280.86px;font-size:31.5px;color:#999999;font-family:'Liberation Mono',monospace;letter-spacing:-2.859px;">432</div>
<div class="t" style="left:809.7px;top:336.86px;font-size:31.5px;color:#999999;font-family:'Liberation Mono',monospace;letter-spacing:-2.859px;">433</div>
<div class="t" style="left:809.7px;top:392.86px;font-size:31.5px;color:#999999;font-family:'Liberation Mono',monospace;letter-spacing:-2.859px;">434</div>
<div class="t" style="left:809.7px;top:448.86px;font-size:31.5px;color:#999999;font-family:'Liberation Mono',monospace;letter-spacing:-2.859px;">435</div>
<div class="t" style="left:809.7px;top:504.86px;font-size:31.5px;color:#999999;font-family:'Liberation Mono',monospace;letter-spacing:-2.859px;">436</div>
<div class="t" style="left:809.7px;top:560.86px;font-size:31.5px;color:#999999;font-family:'Liberation Mono',monospace;letter-spacing:-2.859px;">437</div>
<div class="t" style="left:809.7px;top:616.86px;font-size:31.5px;color:#999999;font-family:'Liberation Mono',monospace;letter-spacing:-2.859px;">438</div>
<div class="t" style="left:809.7px;top:672.86px;font-size:31.5px;color:#999999;font-family:'Liberation Mono',monospace;letter-spacing:-2.859px;">439</div>
<div class="t" style="left:809.7px;top:728.86px;font-size:31.5px;color:#999999;font-family:'Liberation Mono',monospace;letter-spacing:-2.859px;">440</div>
<div class="t" style="left:809.7px;top:784.86px;font-size:31.5px;color:#999999;font-family:'Liberation Mono',monospace;letter-spacing:-2.859px;">441</div>
<div class="t" style="left:809.7px;top:840.86px;font-size:31.5px;color:#999999;font-family:'Liberation Mono',monospace;letter-spacing:-2.859px;">442</div>
<div class="t" style="left:809.7px;top:896.86px;font-size:31.5px;color:#999999;font-family:'Liberation Mono',monospace;letter-spacing:-2.859px;">443</div>
<div class="t" style="left:809.7px;top:952.86px;font-size:31.5px;color:#999999;font-family:'Liberation Mono',monospace;letter-spacing:-2.859px;">444</div>
<svg style="left:937.3px;top:390.3px;" width="22" height="28" viewBox="0 0 22 28"><path d="M1 26.5 V10 L10.75 0.8 L20.5 10 V26.5 Z" fill="#fff" stroke="#c9cdd0" stroke-width="1.6"/><path d="M5.5 17 H16" stroke="#c9cdd0" stroke-width="1.6"/></svg>
<svg style="left:937.3px;top:452.5px;" width="22" height="28" viewBox="0 0 22 28"><path d="M1 0.8 H20.5 V17 L10.75 26 L1 17 Z" fill="#fff" stroke="#c9cdd0" stroke-width="1.6"/><path d="M5.5 10.5 H16" stroke="#c9cdd0" stroke-width="1.6"/></svg>
<svg style="left:937.3px;top:564.5px;" width="22" height="28" viewBox="0 0 22 28"><path d="M1 0.8 H20.5 V17 L10.75 26 L1 17 Z" fill="#fff" stroke="#c9cdd0" stroke-width="1.6"/><path d="M5.5 10.5 H16" stroke="#c9cdd0" stroke-width="1.6"/></svg>
<svg style="left:937.3px;top:620.5px;" width="22" height="28" viewBox="0 0 22 28"><path d="M1 0.8 H20.5 V17 L10.75 26 L1 17 Z" fill="#fff" stroke="#c9cdd0" stroke-width="1.6"/><path d="M5.5 10.5 H16" stroke="#c9cdd0" stroke-width="1.6"/></svg>
<svg style="left:937.3px;top:788.5px;" width="22" height="28" viewBox="0 0 22 28"><path d="M1 0.8 H20.5 V17 L10.75 26 L1 17 Z" fill="#fff" stroke="#c9cdd0" stroke-width="1.6"/><path d="M5.5 10.5 H16" stroke="#c9cdd0" stroke-width="1.6"/></svg>
<svg style="left:937.3px;top:894.3px;" width="22" height="28" viewBox="0 0 22 28"><path d="M1 26.5 V10 L10.75 0.8 L20.5 10 V26.5 Z" fill="#fff" stroke="#c9cdd0" stroke-width="1.6"/><path d="M5.5 17 H16" stroke="#c9cdd0" stroke-width="1.6"/></svg>
<svg style="left:979.6px;top:441px;" width="21" height="28" viewBox="0 0 21 28"><circle cx="10.5" cy="9" r="9" fill="#ee8c63"/><path d="M5 14 H16 L14 19 H7 Z" fill="#ee8c63"/><path d="M5 22 H16 M6 26 H15" stroke="#555" stroke-width="2"/></svg>
<div class="t" style="left:1062.6px;top:167.27px;font-size:33.33px;color:#8c8c8c;font-style:italic;font-family:'Liberation Mono',monospace;">* Main method and entry point when starting Tomcat via the provided</div>
<div class="t" style="left:1062.6px;top:223.27px;font-size:33.33px;color:#8c8c8c;font-style:italic;font-family:'Liberation Mono',monospace;">* scripts.</div>
<div class="t" style="left:1062.6px;top:279.27px;font-size:33.33px;color:#8c8c8c;font-style:italic;font-family:'Liberation Mono',monospace;">*</div>
<div class="t" style="left:1062.6px;top:335.27px;font-size:33.33px;color:#8c8c8c;font-style:italic;font-family:'Liberation Mono',monospace;">* </div>
<div class="t" style="left:1102.6px;top:335.27px;font-size:33.33px;color:#8c8c8c;font-weight:700;font-style:italic;font-family:'Liberation Mono',monospace;text-decoration:underline;text-underline-offset:4px">@param</div>
<div class="t" style="left:1222.6px;top:335.27px;font-size:33.33px;color:#8c8c8c;font-style:italic;font-family:'Liberation Mono',monospace;"> args Command line arguments to be processed</div>
<div class="t" style="left:1062.6px;top:391.27px;font-size:33.33px;color:#8c8c8c;font-style:italic;font-family:'Liberation Mono',monospace;">*/</div>
<div class="a" style="left:1422px;top:433.6px;width:99.5px;height:54.4px;background:#5b74ad;border:2px solid #1e2433"></div>
<div class="t" style="left:1042.6px;top:447.27px;font-size:33.33px;color:#000080;font-weight:700;font-family:'Liberation Mono',monospace;">public static void </div>
<div class="t" style="left:1422.6px;top:447.27px;font-size:33.33px;color:#fff;font-family:'Liberation Mono',monospace;">main(</div>
<div class="t" style="left:1522.6px;top:447.27px;font-size:33.33px;color:#000;font-family:'Liberation Mono',monospace;">String args[]) {</div>
<div class="t" style="left:1122.6px;top:559.27px;font-size:33.33px;color:#000080;font-weight:700;font-family:'Liberation Mono',monospace;">synchronized</div>
<div class="t" style="left:1362.6px;top:559.27px;font-size:33.33px;color:#000;font-family:'Liberation Mono',monospace;"> (daemonLock) {</div>
<div class="t" style="left:1202.6px;top:615.27px;font-size:33.33px;color:#000080;font-weight:700;font-family:'Liberation Mono',monospace;">if</div>
<div class="t" style="left:1242.6px;top:615.27px;font-size:33.33px;color:#000;font-family:'Liberation Mono',monospace;"> (daemon == </div>
<div class="t" style="left:1482.6px;top:615.27px;font-size:33.33px;color:#000080;font-weight:700;font-family:'Liberation Mono',monospace;">null</div>
<div class="t" style="left:1562.6px;top:615.27px;font-size:33.33px;color:#000;font-family:'Liberation Mono',monospace;">) {</div>
<div class="t" style="left:1282.6px;top:671.27px;font-size:33.33px;color:#8c8c8c;font-style:italic;font-family:'Liberation Mono',monospace;">// Don&#x27;t set daemon until init() has completed</div>
<div class="t" style="left:1282.6px;top:727.27px;font-size:33.33px;color:#000;font-family:'Liberation Mono',monospace;">Bootstrap bootstrap = </div>
<div class="t" style="left:1722.6px;top:727.27px;font-size:33.33px;color:#000080;font-weight:700;font-family:'Liberation Mono',monospace;">new</div>
<div class="t" style="left:1782.6px;top:727.27px;font-size:33.33px;color:#000;font-family:'Liberation Mono',monospace;"> Bootstrap();</div>
<div class="t" style="left:1282.6px;top:783.27px;font-size:33.33px;color:#000080;font-weight:700;font-family:'Liberation Mono',monospace;">try</div>
<div class="t" style="left:1342.6px;top:783.27px;font-size:33.33px;color:#000;font-family:'Liberation Mono',monospace;"> {</div>
<div class="t" style="left:1362.6px;top:839.27px;font-size:33.33px;color:#000;font-family:'Liberation Mono',monospace;">bootstrap.init();</div>
<div class="t" style="left:1282.6px;top:895.27px;font-size:33.33px;color:#000;font-family:'Liberation Mono',monospace;">} </div>
<div class="t" style="left:1322.6px;top:895.27px;font-size:33.33px;color:#000080;font-weight:700;font-family:'Liberation Mono',monospace;">catch</div>
<div class="t" style="left:1422.6px;top:895.27px;font-size:33.33px;color:#000;font-family:'Liberation Mono',monospace;"> (Throwable t) {</div>
<div class="t" style="left:1362.6px;top:951.27px;font-size:33.33px;color:#000;font-family:'Liberation Mono',monospace;">handleThrowable(t);</div>
<div class="a" style="left:3010px;top:729px;width:14px;height:63px;background:#c9cbcd;border-radius:7px"></div>
<div class="a" style="left:3002px;top:770px;width:28px;height:3px;background:#5aa55a;"></div>
<div class="a" style="left:2344px;top:84.6px;width:688px;height:126.4px;background:#ececec;border-radius:16px;box-shadow:0 3px 12px rgba(0,0,0,0.16);border:1px solid #d0d0d0"></div>
<div class="a" style="left:2368.5px;top:126px;width:16px;height:16px;background:#4a8fdc;"></div>
<div class="a" style="left:2384.5px;top:126px;width:16px;height:16px;background:#f4f4f4;"></div>
<div class="a" style="left:2400.5px;top:126px;width:16px;height:16px;background:#e4e4e4;"></div>
<div class="a" style="left:2416.5px;top:126px;width:16px;height:16px;background:#c9d1d7;"></div>
<div class="a" style="left:2368.5px;top:142px;width:16px;height:16px;background:#cdcfd1;"></div>
<div class="a" style="left:2384.5px;top:142px;width:16px;height:16px;background:#4a8fdc;"></div>
<div class="a" style="left:2400.5px;top:142px;width:16px;height:16px;background:#e6e6e6;"></div>
<div class="a" style="left:2388px;top:158px;width:12px;height:12px;background:#4a8fdc;"></div>
<div class="a" style="left:2448.5px;top:110px;width:16px;height:15.8px;background:#9a9a9a;"></div>
<div class="a" style="left:2464.5px;top:110px;width:48px;height:15.8px;background:#c2bebe;"></div>
<div class="a" style="left:2528.5px;top:110px;width:16px;height:15.8px;background:#7a7a7a;"></div>
<div class="a" style="left:2544.5px;top:110px;width:16px;height:15.8px;background:#686868;"></div>
<div class="a" style="left:2560.5px;top:110px;width:16px;height:15.8px;background:#e2e2e2;"></div>
<div class="a" style="left:2576.5px;top:110px;width:16px;height:15.8px;background:#6e6e6e;"></div>
<div class="a" style="left:2448.5px;top:125.8px;width:16px;height:16px;background:#b8b8b8;"></div>
<div class="a" style="left:2464.5px;top:125.8px;width:48px;height:16px;background:#cfd2d4;"></div>
<div class="a" style="left:2512.5px;top:125.8px;width:16px;height:16px;background:#e4e4e4;"></div>
<div class="a" style="left:2528.5px;top:125.8px;width:16px;height:16px;background:#7a7a7a;"></div>
<div class="a" style="left:2576.5px;top:125.8px;width:16px;height:16px;background:#d4d4d4;"></div>
<div class="a" style="left:2448.5px;top:158px;width:16px;height:15.5px;background:#b0b0b0;"></div>
<div class="a" style="left:2464.5px;top:158px;width:33px;height:15.5px;background:#cfd2d4;"></div>
<div class="a" style="left:2497.5px;top:158px;width:31px;height:15.5px;background:#7a7a7a;"></div>
<div class="a" style="left:2544.5px;top:158px;width:32px;height:15.5px;background:#a8a8a8;"></div>
<div class="a" style="left:2592.5px;top:158px;width:16px;height:15.5px;background:#5e5e5e;"></div>
<div class="a" style="left:2608.5px;top:158px;width:16px;height:15.5px;background:#e4e4e4;"></div>
<div class="a" style="left:2624.5px;top:158px;width:32px;height:15.5px;background:#9c9c9c;"></div>
<div class="a" style="left:2656.5px;top:158px;width:16px;height:15.5px;background:#888;"></div>
<div class="a" style="left:2672.5px;top:158px;width:16px;height:15.5px;background:#aaa;"></div>
<div class="a" style="left:2688.5px;top:158px;width:16px;height:15.5px;background:#8a8a8a;"></div>
<div class="a" style="left:2704.5px;top:158px;width:16px;height:15.5px;background:#777;"></div>
<div class="a" style="left:2720.5px;top:158px;width:16px;height:15.5px;background:#c4c0c0;"></div>
<div class="a" style="left:2736.5px;top:158px;width:16px;height:15.5px;background:#bcb8b8;"></div>
<div class="a" style="left:2752.5px;top:158px;width:16px;height:15.5px;background:#e2e2e2;"></div>
<div class="a" style="left:2943.5px;top:110px;width:16px;height:15px;background:#8a8a8a;"></div>
<div class="a" style="left:2959.5px;top:110px;width:16px;height:15px;background:#d6d6d6;"></div>
<div class="a" style="left:2975.5px;top:110px;width:16px;height:15px;background:#8e8e8e;"></div>
<div class="a" style="left:2911.7px;top:174.5px;width:16px;height:14.5px;background:#999;"></div>
<div class="a" style="left:2943.7px;top:174.5px;width:16px;height:14.5px;background:#d0d0d0;"></div>
<div class="a" style="left:2959.7px;top:174.5px;width:16px;height:14.5px;background:#8a8a8a;"></div>
<div class="a" style="left:2975.7px;top:174.5px;width:16px;height:14.5px;background:#999;"></div>
<div class="a" style="left:2991.7px;top:174.5px;width:16px;height:14.5px;background:#777;"></div>
<div class="a" style="left:2891px;top:87px;width:1px;height:124px;background:#dcdcdc;"></div>
<div class="a" style="left:42px;top:993px;width:2988px;height:52px;background:#f2f2f2;"></div>
<div class="t" style="left:54.4px;top:1008.15px;font-size:25px;color:#1a1a1a;letter-spacing:0.289px;">Sequence Diagram:</div>
<div class="t" style="left:320.5px;top:1008.15px;font-size:25px;color:#1a1a1a;letter-spacing:0.500px;">Open...</div>
<svg style="left:420px;top:1015px;" width="15" height="15" viewBox="0 0 15 15"><path d="M0 0 L15 15 M15 0 L0 15" stroke="#b9bec2" stroke-width="1.8"/></svg>
<div class="t" style="left:482.6px;top:1008.15px;font-size:25px;color:#1a1a1a;letter-spacing:0.823px;">Bootstrap.start()</div>
<svg style="left:692px;top:1015px;" width="15" height="15" viewBox="0 0 15 15"><path d="M0 0 L15 15 M15 0 L0 15" stroke="#b9bec2" stroke-width="1.8"/></svg>
<div class="t" style="left:754.5px;top:1008.15px;font-size:25px;color:#1a1a1a;letter-spacing:0.647px;">Bootstrap.main()</div>
<svg style="left:964px;top:1015px;" width="15" height="15" viewBox="0 0 15 15"><path d="M0 0 L15 15 M15 0 L0 15" stroke="#b9bec2" stroke-width="1.8"/></svg>
<div class="t" style="left:1026px;top:1008.15px;font-size:25px;color:#1a1a1a;letter-spacing:0.614px;">Bootstrap.main()</div>
<svg style="left:1236px;top:1015px;" width="15" height="15" viewBox="0 0 15 15"><path d="M0 0 L15 15 M15 0 L0 15" stroke="#b9bec2" stroke-width="1.8"/></svg>
<div class="a" style="left:1001.5px;top:1041px;width:272.5px;height:5px;background:#a3a7ab;"></div>
<svg style="left:2940px;top:1006px;" width="25" height="25" viewBox="0 0 25 25"><rect x="9.5" y="0" width="6" height="25" fill="#7b7b7b" transform="rotate(0 12.5 12.5)"/><rect x="9.5" y="0" width="6" height="25" fill="#7b7b7b" transform="rotate(60 12.5 12.5)"/><rect x="9.5" y="0" width="6" height="25" fill="#7b7b7b" transform="rotate(120 12.5 12.5)"/><rect x="9.5" y="0" width="6" height="25" fill="#7b7b7b" transform="rotate(180 12.5 12.5)"/><rect x="9.5" y="0" width="6" height="25" fill="#7b7b7b" transform="rotate(240 12.5 12.5)"/><rect x="9.5" y="0" width="6" height="25" fill="#7b7b7b" transform="rotate(300 12.5 12.5)"/><circle cx="12.5" cy="12.5" r="9.0" fill="#7b7b7b"/><circle cx="12.5" cy="12.5" r="4.0" fill="#f2f2f2"/></svg>
<div class="a" style="left:2992px;top:1016.8px;width:24px;height:4.2px;background:#7b7b7b;"></div>
<svg style="left:59px;top:1070px;" width="24" height="15" viewBox="0 0 24 15"><path d="M0 0 L11 7.5 L0 15 Z M12 0 L23 7.5 L12 15 Z" fill="#6e6e6e"/></svg>
<svg style="left:57px;top:1118.5px;" width="24" height="23" viewBox="0 0 24 23"><rect x="3.5" y="2.5" width="19" height="19" fill="none" stroke="#6e6e6e" stroke-width="2.4"/><path d="M0 8.5 L9 0 V4.5 Q17 5 18 16 Q14 10.5 9 11 V17 Z" fill="#6e6e6e" stroke="#f2f2f2" stroke-width="1.6"/></svg>
<svg style="left:58px;top:1167px;" width="24" height="29" viewBox="0 0 24 29"><path d="M7 1 H20 Q22 1 22 3 V25 Q22 27 20 27 H3 Q1 27 1 25 V7 Z" fill="none" stroke="#222" stroke-width="2"/><path d="M1 7 H7 V1" fill="none" stroke="#222" stroke-width="1.2"/><path d="M6 11 V10 H17 V11 M11.5 10 V23 M9 23 H14" fill="none" stroke="#222" stroke-width="1.6"/></svg>
<svg style="left:58px;top:1219px;" width="24" height="29" viewBox="0 0 24 29"><path d="M7 1 H20 Q22 1 22 3 V25 Q22 27 20 27 H3 Q1 27 1 25 V7 Z" fill="none" stroke="#c0c0c0" stroke-width="2"/><path d="M1 7 H7 V1" fill="none" stroke="#c0c0c0" stroke-width="1.2"/><path d="M6 11 V10 H17 V11 M11.5 10 V23 M9 23 H14" fill="none" stroke="#c0c0c0" stroke-width="1.6"/></svg>
<div class="a" style="left:99px;top:1809px;width:2929px;height:27px;background:#f4f4f4;"></div>
<div class="a" style="left:99px;top:1808px;width:2904px;height:1px;background:#e4e4e4;"></div>
<div class="a" style="left:3002px;top:1106px;width:26px;height:703px;background:#f5f5f5;"></div>
<div class="a" style="left:3002px;top:1106px;width:1px;height:703px;background:#e6e6e6;"></div>
<div class="a" style="left:3005px;top:1108px;width:20px;height:266px;background:linear-gradient(90deg,#f4f4f4,#e2e2e2);border:1.5px solid #b8bcc0;border-radius:5px"></div>
<svg style="left:3004px;top:1815px;" width="23" height="14" viewBox="0 0 23 14"><path d="M1 7 Q11.5 -4 22 7 Q11.5 18 1 7 Z" fill="none" stroke="#8c8c8c" stroke-width="1.6"/><circle cx="11.5" cy="7" r="3" fill="none" stroke="#8c8c8c" stroke-width="1.6"/></svg>
<svg style="left:0px;top:0px;clip-path:inset(1048px 0 110px 99px)" width="3071" height="1919" viewBox="0 0 3071 1919"><rect x="111" y="1063.5" width="78" height="42" fill="#fefec0" stroke="#000" stroke-width="2"/><rect x="200.5" y="1063.5" width="122" height="42" fill="#fefec0" stroke="#000" stroke-width="2"/><path d="M150.3 1107 V1810" stroke="#000" stroke-width="2" stroke-dasharray="24 11.7" stroke-dashoffset="0"/><path d="M262.6 1107 V1204" stroke="#000" stroke-width="2" stroke-dasharray="24 11.7"/><rect x="255.4" y="1214" width="15" height="600" fill="#fae0a4" stroke="#000" stroke-width="2"/><path d="M153.6 1213.3 H248" stroke="#000" stroke-width="2"/><path d="M246 1207.5 L255 1213.3 L246 1219 Z" fill="#000"/><rect x="261.2" y="1261.3" width="15.6" height="190.10000000000014" fill="#fae0a4" stroke="#000" stroke-width="2"/><path d="M276.8 1261.3 H325 V1277.3 H285.5" fill="none" stroke="#000" stroke-width="2"/><path d="M286.5 1271.8 L277.5 1277.3 L286.5 1282.8 Z" fill="#000"/><rect x="267.2" y="1325.8" width="15.6" height="61.5" fill="#fae0a4" stroke="#000" stroke-width="2"/><path d="M282.8 1325.8 H413 V1341.8 H291.5" fill="none" stroke="#000" stroke-width="2"/><path d="M292.5 1336.3 L283.5 1341.8 L292.5 1347.3 Z" fill="#000"/><rect x="260.8" y="1517.8" width="15.6" height="61.5" fill="#fae0a4" stroke="#000" stroke-width="2"/><path d="M276.40000000000003 1517.8 H400.8 V1533.8 H285.5" fill="none" stroke="#000" stroke-width="2"/><path d="M286.5 1528.3 L277.5 1533.8 L286.5 1539.3 Z" fill="#000"/><rect x="260.8" y="1645.4" width="15.6" height="62.09999999999991" fill="#fae0a4" stroke="#000" stroke-width="2"/><path d="M276.40000000000003 1645.4 H330.6 V1661.4 H285.5" fill="none" stroke="#000" stroke-width="2"/><path d="M286.5 1655.9 L277.5 1661.4 L286.5 1666.9 Z" fill="#000"/><rect x="260.8" y="1773.3" width="15.6" height="56.700000000000045" fill="#fae0a4" stroke="#000" stroke-width="2"/><path d="M276.40000000000003 1773.3 H333 V1789.3 H285.5" fill="none" stroke="#000" stroke-width="2"/><path d="M286.5 1783.8 L277.5 1789.3 L286.5 1794.8 Z" fill="#000"/></svg>
<div class="t" style="left:173.6px;top:1179.72px;font-size:21.5px;color:#000;letter-spacing:0.971px;text-decoration:underline;text-underline-offset:3px;text-decoration-thickness:1.5px">1:main</div>
<div class="t" style="left:290px;top:1227.72px;font-size:21.5px;color:#000;letter-spacing:1.234px;">1.1:init</div>
<div class="t" style="left:296px;top:1291.72px;font-size:21.5px;color:#000;letter-spacing:0.965px;">1.1.1:initClassLoaders</div>
<div class="t" style="left:289.7px;top:1483.22px;font-size:21.5px;color:#000;letter-spacing:1.177px;text-decoration:underline;text-underline-offset:4px;text-decoration-thickness:1.5px">1.2:handleThrowable</div>
<div class="t" style="left:289.7px;top:1611.22px;font-size:21.5px;color:#000;letter-spacing:0.926px;">1.3:load</div>
<div class="t" style="left:289.7px;top:1739.72px;font-size:21.5px;color:#000;letter-spacing:1.289px;">1.4:start</div>
<div class="t" style="left:296px;top:1802.22px;font-size:21.5px;color:#000;letter-spacing:1.524px;">1.4.1:init</div>
<div class="t" style="left:120px;top:1072.17px;font-size:24.5px;color:#333;letter-spacing:0.078px;">Actor</div>
<div class="t" style="left:210px;top:1072.17px;font-size:24.5px;color:#333;letter-spacing:-0.234px;">Bootstrap</div>
<div class="a" style="left:99px;top:1809px;width:2904px;height:27px;background:#f4f4f4;"></div>
<div class="a" style="left:99px;top:1808px;width:2904px;height:1px;background:#e4e4e4;"></div>
<svg style="left:3004px;top:1815px;" width="23" height="14" viewBox="0 0 23 14"><path d="M1 7 Q11.5 -4 22 7 Q11.5 18 1 7 Z" fill="none" stroke="#8c8c8c" stroke-width="1.6"/><circle cx="11.5" cy="7" r="3" fill="none" stroke="#8c8c8c" stroke-width="1.6"/></svg>
<svg style="left:65.5px;top:1849px;" width="21" height="20" viewBox="0 0 21 20"><path d="M0 2 H4 M7 2 H21 M0 10 H4 M7 10 H21 M0 18 H4 M7 18 H21" stroke="#6e6e6e" stroke-width="3"/></svg>
<div class="t" style="left:96.5px;top:1847.17px;font-size:24.5px;color:#1a1a1a;letter-spacing:-1.107px;">6: TODO</div>
<div class="a" style="left:97px;top:1870px;width:14px;height:2px;background:#1a1a1a;"></div>
<svg style="left:229.8px;top:1847px;" width="26" height="26" viewBox="0 0 26 26"><circle cx="13" cy="13" r="11.5" fill="none" stroke="#e04a5f" stroke-width="2.5"/><path d="M3 11 H23 M3 15 H23" stroke="#e04a5f" stroke-width="2"/><path d="M6 13 L9 11.5 L12 14 L15 11.5 L18 14 L21 13" fill="none" stroke="#e04a5f" stroke-width="1.5"/></svg>
<div class="t" style="left:264.5px;top:1847.17px;font-size:24.5px;color:#1a1a1a;letter-spacing:-0.549px;">SonarLint</div>
<svg style="left:410px;top:1849px;" width="22" height="21" viewBox="0 0 22 21"><rect x="0" y="0" width="22" height="21" fill="#6e6e6e"/><path d="M4 4 L10 9 L4 14" fill="none" stroke="#f2f2f2" stroke-width="2"/><path d="M11 16 H18" stroke="#f2f2f2" stroke-width="2"/></svg>
<div class="t" style="left:443px;top:1847.17px;font-size:24.5px;color:#1a1a1a;letter-spacing:-0.713px;">Terminal</div>
<svg style="left:572px;top:1847px;" width="26" height="26" viewBox="0 0 26 26"><rect x="-9" y="-3" width="18" height="6" fill="#6e6e6e" transform="translate(8 7) rotate(-45)"/><rect x="0" y="-3" width="24" height="6" fill="#6e6e6e" transform="translate(9 6) rotate(45)"/></svg>
<div class="t" style="left:606.6px;top:1847.17px;font-size:24.5px;color:#1a1a1a;letter-spacing:-0.771px;">Build</div>
<svg style="left:703.5px;top:1850px;" width="22" height="20" viewBox="0 0 22 20"><path d="M0 2 H22 M0 9 H14 M0 16 H22" stroke="#6e6e6e" stroke-width="3"/></svg>
<div class="t" style="left:736.5px;top:1847.17px;font-size:24.5px;color:#1a1a1a;letter-spacing:-0.491px;">0: Messages</div>
<div class="a" style="left:737px;top:1870px;width:14px;height:2px;background:#1a1a1a;"></div>
<svg style="left:922px;top:1849px;" width="24" height="24" viewBox="0 0 24 24"><rect x="0" y="0" width="19" height="19" fill="#6e6e6e"/><rect x="7" y="7" width="17" height="17" fill="#f2f2f2"/><rect x="8.5" y="8.5" width="15.5" height="15.5" fill="#6e6e6e"/><path d="M11 12 H15 M11 12 V21 H15 M11 16.5 H14 M17 12 H21 M17 12 V21 H21 M17 16.5 H20" stroke="#f2f2f2" stroke-width="1.5" fill="none"/></svg>
<div class="t" style="left:955px;top:1847.17px;font-size:24.5px;color:#1a1a1a;letter-spacing:-0.474px;">Java Enterprise</div>
<div class="a" style="left:1144px;top:1839px;width:287.6px;height:39px;background:#c4c4c6;"></div>
<svg style="left:1170.6px;top:1850px;" width="25" height="20" viewBox="0 0 25 20"><rect x="9" y="0" width="6" height="20" fill="#f0a58a" stroke="#333" stroke-width="1.5"/><path d="M0 5 H8 M5 2 L8 5 L5 8 M15 14 H24 M21 11 L24 14 L21 17" fill="none" stroke="#333" stroke-width="1.6"/></svg>
<div class="t" style="left:1205px;top:1847.17px;font-size:24.5px;color:#1a1a1a;letter-spacing:-0.662px;">Sequence Diagram</div>
<svg style="left:2868px;top:1848px;" width="26" height="26" viewBox="0 0 26 26"><path d="M13 0 A13 13 0 1 0 13 26 H26 V13 A13 13 0 0 0 13 0 Z" fill="#59a869"/><text x="13" y="20" text-anchor="middle" font-family="Liberation Sans" font-weight="700" font-size="18" fill="#fff">2</text></svg>
<div class="t" style="left:2902px;top:1847.17px;font-size:24.5px;color:#1a1a1a;letter-spacing:-0.668px;">Event Log</div>
<svg style="left:12.6px;top:1889px;" width="24" height="24" viewBox="0 0 24 24"><rect x="5" y="1" width="18" height="16" fill="none" stroke="#5e5e5e" stroke-width="2.2"/><path d="M1 5 V23 H19" fill="none" stroke="#5e5e5e" stroke-width="2.2"/></svg>
<div class="t" style="left:63.2px;top:1890.49px;font-size:23.3px;color:#1a1a1a;letter-spacing:0.376px;">Frameworks Detected: OSGi, Web frameworks are detected. // Configure (today 3:46</div>
<svg style="left:979.5px;top:1891.5px;" width="42" height="20" viewBox="0 0 42 20"><path d="M1 2.2 H19.5 M9.5 2.2 V19.5 M11 8 Q14.5 9.5 17 12" fill="none" stroke="#1a1a1a" stroke-width="1.9"/><path d="M26 0.5 Q25 4 22.5 6.5 M25 4 H38.5 M22 11.5 H40.5 M31.5 4 V19.5" fill="none" stroke="#1a1a1a" stroke-width="1.9"/></svg>
<div class="t" style="left:1019.5px;top:1890.49px;font-size:23.3px;color:#1a1a1a;">)</div>
<div class="t" style="left:2466.5px;top:1890.49px;font-size:23.3px;color:#1a1a1a;letter-spacing:0.182px;">5 chars</div>
<div class="t" style="left:2579.6px;top:1890.49px;font-size:23.3px;color:#1a1a1a;letter-spacing:0.747px;">435:28</div>
<div class="t" style="left:2680.6px;top:1890.49px;font-size:23.3px;color:#1a1a1a;letter-spacing:-1.948px;">CRLF</div>
<div class="t" style="left:2760px;top:1890.49px;font-size:23.3px;color:#1a1a1a;letter-spacing:0.371px;">UTF-8</div>
<div class="t" style="left:2854.7px;top:1890.49px;font-size:23.3px;color:#1a1a1a;letter-spacing:0.221px;">4 spaces</div>
<svg style="left:2974px;top:1889px;" width="23" height="23" viewBox="0 0 23 23"><path d="M2 12 V6 Q2 1 7 1 Q12 1 12 6 V9" fill="none" stroke="#6e6e6e" stroke-width="2.4"/><rect x="8" y="10" width="15" height="13" fill="#6e6e6e"/></svg>
<svg style="left:3024px;top:1887px;" width="24" height="26" viewBox="0 0 24 26"><path d="M6 1 H18 L19 7 H23 V9 H1 V7 H5 Z" fill="#6e6e6e"/><circle cx="12" cy="15" r="6" fill="none" stroke="#6e6e6e" stroke-width="2"/><path d="M2 26 Q12 18 22 26 Z" fill="#6e6e6e"/></svg>
<div class="a" style="left:201px;top:502.4px;width:347.4px;height:64.6px;border:5.6px solid #e84c7b"></div>
<div class="a" style="left:103.4px;top:1057px;width:413px;height:763px;border:5.6px solid #e84c7b"></div>
<div class="a" style="left:1126.6px;top:1813px;width:321.4px;height:84.5px;border:6px solid #e84c7b"></div>
</body></html>
